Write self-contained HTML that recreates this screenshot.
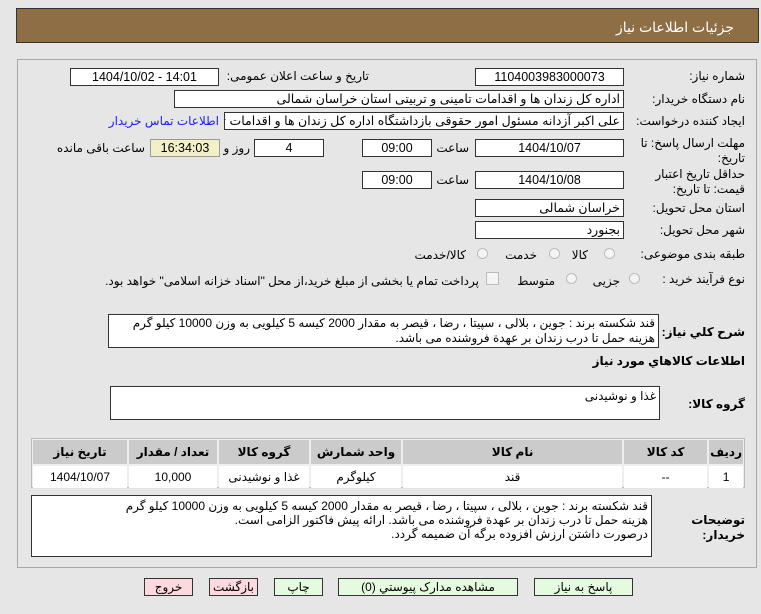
<!DOCTYPE html>
<html><head><meta charset="utf-8"><style>
body{margin:0;width:761px;height:614px;background:#e6e6e6;font-family:"Liberation Sans","DejaVu Sans",sans-serif;font-size:12px;color:#000;position:relative;overflow:hidden}
.a{position:absolute}
.in{position:absolute;background:#fff;border:1px solid #333;box-sizing:border-box;height:18px;line-height:16px;font-size:12.5px;padding:0 3px;white-space:nowrap;overflow:hidden}
.c{text-align:center}.r{text-align:right;direction:rtl}
.lb{position:absolute;direction:rtl;text-align:right;white-space:nowrap}
.b{font-weight:bold}
.rad{position:absolute;width:11px;height:11px;border:1px solid #bbb;border-radius:50%;background:#f4f4f4;box-sizing:border-box}
.ta{position:absolute;background:#fff;border:1px solid #333;box-sizing:border-box;direction:rtl;text-align:right;padding:2px 3px;line-height:15px;font-size:12px}
table{border-collapse:separate;border-spacing:2px}
th{background:#cbcbcb;font-weight:bold;height:22px;font-size:12px}
td{background:#fff;height:20px;text-align:center;font-size:12px}
.btn{position:absolute;height:18px;border:1px solid #333;box-sizing:border-box;text-align:center;line-height:16px;font-size:12px}
</style></head><body>
<div class="a" style="left:16px;top:8px;width:743px;height:35px;background:#8d6e45;border:1px solid #333;box-sizing:border-box"></div>
<div class="lb" style="right:27px;top:19px;color:#fff;font-size:14px">جزئیات اطلاعات نیاز</div>
<div class="a" style="left:17px;top:59px;width:740px;height:509px;border:1px solid #a8a8a8;box-sizing:border-box;background:#e6e6e6"></div>

<div class="lb" style="right:16px;top:69px">شماره نیاز:</div>
<div class="in c" style="left:475px;top:68px;width:149px">1104003983000073</div>
<div class="lb" style="right:392px;top:69px">تاریخ و ساعت اعلان عمومی:</div>
<div class="in c" style="left:70px;top:68px;width:149px">1404/10/02 - 14:01</div>

<div class="lb" style="right:16px;top:92px">نام دستگاه خریدار:</div>
<div class="in r" style="left:174px;top:90px;width:450px">اداره کل زندان ها و اقدامات تامینی و تربیتی استان خراسان شمالی</div>

<div class="lb" style="right:16px;top:114px">ایجاد کننده درخواست:</div>
<div class="in r" style="left:224px;top:112px;width:400px">علی اکبر  آزدانه مسئول امور حقوقی بازداشتگاه اداره کل زندان ها و اقدامات تامینی</div>
<div class="lb" style="right:542px;top:114px;color:#1a1aff">اطلاعات تماس خریدار</div>

<div class="lb" style="right:16px;top:136px;line-height:15px">مهلت ارسال پاسخ: تا<br>تاریخ:</div>
<div class="in c" style="left:475px;top:139px;width:149px">1404/10/07</div>
<div class="lb" style="right:292px;top:141px">ساعت</div>
<div class="in c" style="left:362px;top:139px;width:70px">09:00</div>
<div class="in c" style="left:254px;top:139px;width:70px">4</div>
<div class="lb" style="right:511px;top:141px">روز و</div>
<div class="in c" style="left:150px;top:139px;width:70px;background:#f3f0c8;border-color:#999">16:34:03</div>
<div class="lb" style="right:616px;top:141px">ساعت باقی مانده</div>

<div class="lb" style="right:16px;top:167px;line-height:15px">حداقل تاریخ اعتبار<br>قیمت: تا تاریخ:</div>
<div class="in c" style="left:475px;top:171px;width:149px">1404/10/08</div>
<div class="lb" style="right:292px;top:173px">ساعت</div>
<div class="in c" style="left:362px;top:171px;width:70px">09:00</div>

<div class="lb" style="right:16px;top:201px">استان محل تحویل:</div>
<div class="in r" style="left:475px;top:199px;width:149px">خراسان شمالی</div>
<div class="lb" style="right:16px;top:223px">شهر محل تحویل:</div>
<div class="in r" style="left:475px;top:221px;width:149px">بجنورد</div>

<div class="lb" style="right:16px;top:247px">طبقه بندی موضوعی:</div>
<div class="rad" style="left:604px;top:248px"></div><div class="lb" style="right:173px;top:248px">کالا</div>
<div class="rad" style="left:549px;top:248px"></div><div class="lb" style="right:224px;top:248px">خدمت</div>
<div class="rad" style="left:477px;top:248px"></div><div class="lb" style="right:295px;top:248px">کالا/خدمت</div>

<div class="lb" style="right:16px;top:272px">نوع فرآیند خرید :</div>
<div class="rad" style="left:629px;top:273px"></div><div class="lb" style="right:141px;top:274px">جزیی</div>
<div class="rad" style="left:566px;top:273px"></div><div class="lb" style="right:206px;top:274px">متوسط</div>
<div class="a" style="left:486px;top:272px;width:11px;height:11px;border:1px solid #bbb;background:#f4f4f4"></div>
<div class="lb" style="right:282px;top:274px">پرداخت تمام یا بخشی از مبلغ خرید،از محل "اسناد خزانه اسلامی" خواهد بود.</div>

<div class="lb b" style="right:16px;top:325px;font-size:12px">شرح کلي نیاز:</div>
<div class="ta" style="left:108px;top:314px;width:551px;height:34px;padding-top:1px">قند شکسته برند : جوین ، بلالی ، سپیتا ، رضا ، قیصر به مقدار 2000 کیسه 5 کیلویی به وزن 10000 کیلو گرم هزینه حمل تا درب زندان بر عهدة فروشنده می باشد.</div>
<div class="lb b" style="right:16px;top:354px;font-size:12px">اطلاعات کالاهاي مورد نیاز</div>
<div class="lb b" style="right:16px;top:397px;font-size:12px">گروه کالا:</div>
<div class="ta" style="left:110px;top:386px;width:550px;height:34px">غذا و نوشیدنی</div>

<div class="a" style="left:31px;top:438px;width:714px;height:50px;border:1px solid #bbb;box-sizing:border-box;background:#eee"></div>
<table class="a" style="left:31px;top:438px;width:714px;direction:rtl">
<tr><th style="width:27px">ردیف</th><th style="width:81px">کد کالا</th><th>نام کالا</th><th style="width:88px">واحد شمارش</th><th style="width:88px">گروه کالا</th><th style="width:86px">تعداد / مقدار</th><th style="width:92px">تاریخ نیاز</th></tr>
<tr><td>1</td><td>--</td><td>قند</td><td>کیلوگرم</td><td>غذا و نوشیدنی</td><td>10,000</td><td>1404/10/07</td></tr>
</table>

<div class="lb b" style="right:16px;top:513px;line-height:15px;font-size:12px">توضیحات<br>خریدار:</div>
<div class="ta" style="left:31px;top:495px;width:621px;height:62px;padding-top:3px;line-height:14px">قند شکسته برند : جوین ، بلالی ، سپیتا ، رضا ، قیصر به مقدار 2000 کیسه 5 کیلویی به وزن 10000 کیلو گرم<br>هزینه حمل تا درب زندان بر عهدة فروشنده می باشد. ارائه پیش فاکتور الزامی است.<br>درصورت داشتن ارزش افزوده برگه آن ضمیمه گردد.</div>

<div class="btn" style="left:534px;top:578px;width:99px;background:#e4fbe0">پاسخ به نیاز</div>
<div class="btn" style="left:338px;top:578px;width:180px;background:#e4fbe0">مشاهده مدارک پیوستي (0)</div>
<div class="btn" style="left:274px;top:578px;width:49px;background:#e4fbe0">چاپ</div>
<div class="btn" style="left:209px;top:578px;width:49px;background:#fbd9dc">بازگشت</div>
<div class="btn" style="left:144px;top:578px;width:49px;background:#fbd9dc">خروج</div>
</body></html>
